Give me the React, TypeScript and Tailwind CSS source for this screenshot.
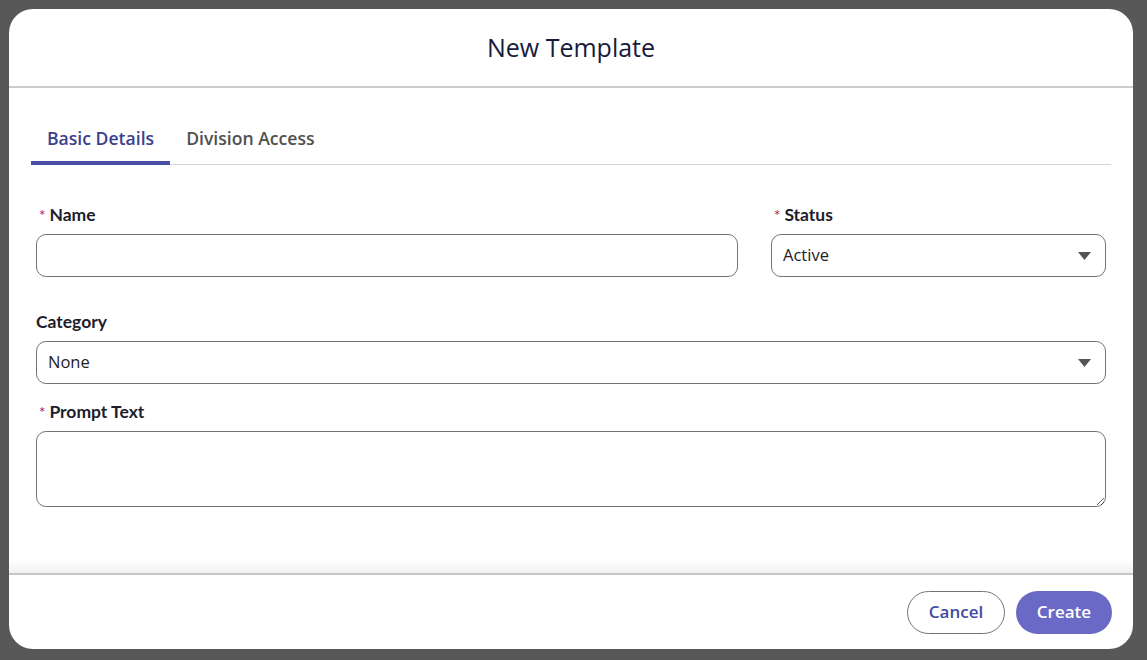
import React, { useState } from 'react';

const Caret = () => (
  <svg width="13" height="8" viewBox="0 0 13 8" className="shrink-0" fill="#555555">
    <path d="M0 0h13L6.5 8z" />
  </svg>
);

const Label = ({ text, required }: { text: string; required?: boolean }) => (
  <label className="mb-[8px] flex items-baseline text-[17.5px] leading-[22px] font-bold text-[#1d1d2c] [font-family:Lato,'Noto_Sans',sans-serif]">
    {required && <span className="ml-[3px] mr-[4px] text-[15px] font-normal text-[#b1164c]">*</span>}
    {text}
  </label>
);

const SelectBox = ({ value }: { value: string }) => (
  <div className="flex h-[43px] items-center justify-between rounded-[10px] border border-[#747474] bg-white pl-[11px] pr-[14px] text-[16.5px] text-[#222222]">
    <span>{value}</span>
    <Caret />
  </div>
);

export default function App() {
  const [tab, setTab] = useState<'basic' | 'division'>('basic');

  const tabs = [
    { id: 'basic' as const, label: 'Basic Details' },
    { id: 'division' as const, label: 'Division Access' },
  ];

  return (
    <div className="h-[660px] w-full overflow-hidden bg-[#585858] pl-[9px] pr-[14px] pt-[9px] pb-[11px] [font-family:'Open_Sans','Noto_Sans',sans-serif]">
      <div className="flex h-full flex-col overflow-hidden rounded-[24px] bg-white">
        {/* header */}
        <div className="flex h-[79px] shrink-0 items-center justify-center border-b-2 border-[#cccccc]">
          <h1 className="text-[25px] font-normal text-[#191b3c]">New Template</h1>
        </div>

        {/* body */}
        <div className="flex-1 px-[22px] pt-[27px]">
          <div className="flex border-b border-[#d4d4d4]">
            {tabs.map((t) => (
              <button
                key={t.id}
                onClick={() => setTab(t.id)}
                className={`relative px-[16px] pt-[11px] pb-[14px] text-[17.6px] leading-[24px] font-semibold ${
                  tab === t.id ? 'text-[#3b3f8e]' : 'text-[#505050]'
                }`}
              >
                {t.label}
                {tab === t.id && <span className="absolute bottom-[-1px] left-0 right-0 h-[4px] bg-[#4a4fa6]" />}
              </button>
            ))}
          </div>

          <div className="px-[5px] pt-[39px]">
            <div className="grid grid-cols-[1fr_335px] gap-x-[33px]">
              <div className="flex flex-col">
                <Label text="Name" required />
                <input className="h-[43px] rounded-[10px] border border-[#747474] px-[11px] text-[16.5px] outline-none" />
              </div>
              <div className="flex flex-col">
                <Label text="Status" required />
                <SelectBox value="Active" />
              </div>
            </div>

            <div className="mt-[34px] flex flex-col">
              <Label text="Category" />
              <SelectBox value="None" />
            </div>

            <div className="mt-[17px] flex flex-col">
              <Label text="Prompt Text" required />
              <textarea className="h-[76px] resize-y rounded-[10px] border border-[#747474] px-[11px] py-[8px] text-[16.5px] outline-none" />
            </div>
          </div>
        </div>

        {/* footer */}
        <div className="relative flex h-[76px] shrink-0 items-center justify-end gap-[11px] border-t-2 border-[#c6c6c6] pr-[21px]">
          <div className="pointer-events-none absolute left-0 right-0 top-[-16px] h-[14px] bg-gradient-to-b from-transparent to-[#f1f1f1]" />
          <button className="h-[43px] w-[98px] rounded-full border border-[#747474] bg-white text-[17px] font-semibold text-[#434aa1]">
            Cancel
          </button>
          <button className="h-[43px] w-[96px] rounded-full bg-[#6a6ac6] text-[17px] font-semibold text-white">
            Create
          </button>
        </div>
      </div>
    </div>
  );
}
